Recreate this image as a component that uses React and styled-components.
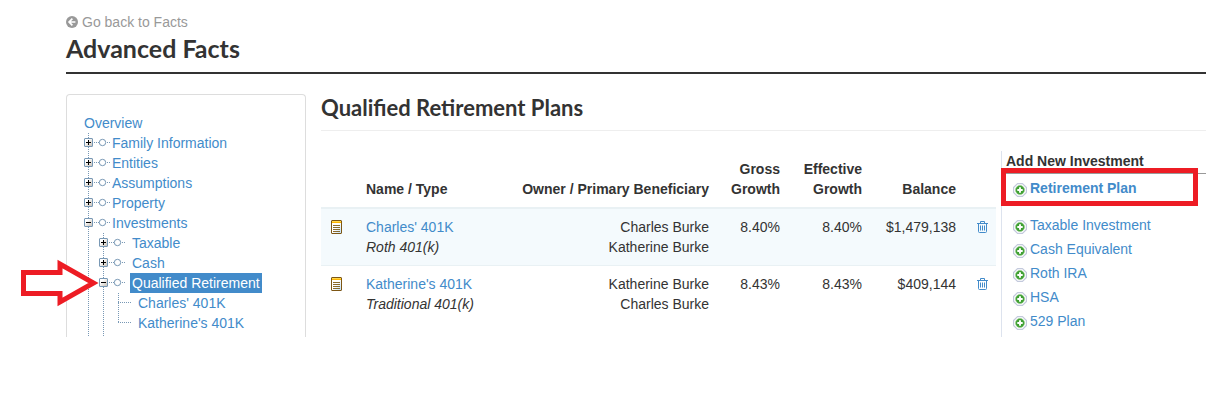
import styled, { createGlobalStyle, css } from "styled-components";

const tree = [
  { label: "Family Information" },
  { label: "Entities" },
  { label: "Assumptions" },
  { label: "Property" },
  {
    label: "Investments",
    children: [
      { label: "Taxable" },
      { label: "Cash" },
      {
        label: "Qualified Retirement",
        selected: true,
        children: [{ label: "Charles' 401K" }, { label: "Katherine's 401K" }],
      },
    ],
  },
];

const plans = [
  {
    name: "Charles' 401K",
    type: "Roth 401(k)",
    owner: "Charles Burke",
    beneficiary: "Katherine Burke",
    gross: "8.40%",
    effective: "8.40%",
    balance: "$1,479,138",
  },
  {
    name: "Katherine's 401K",
    type: "Traditional 401(k)",
    owner: "Katherine Burke",
    beneficiary: "Charles Burke",
    gross: "8.43%",
    effective: "8.43%",
    balance: "$409,144",
  },
];

const investments = [
  "Retirement Plan",
  "Taxable Investment",
  "Cash Equivalent",
  "Roth IRA",
  "HSA",
  "529 Plan",
];

const BackIcon = () => (
  <svg width="12" height="12" viewBox="0 0 12 12" aria-hidden="true">
    <circle cx="6" cy="6" r="6" fill="#999" />
    <path
      d="M6.4 2.7 3.1 6l3.3 3.3M3.4 6h6"
      fill="none"
      stroke="#fff"
      strokeWidth="1.7"
    />
  </svg>
);

const ToggleIcon = ({ open }) => (
  <svg width="9" height="9" viewBox="0 0 9 9" aria-hidden="true">
    <defs>
      <linearGradient id="toggleFill" x1="0" y1="0" x2="1" y2="1">
        <stop offset="0.3" stopColor="#fff" />
        <stop offset="1" stopColor="#c3bbb0" />
      </linearGradient>
    </defs>
    <rect
      x="0.5"
      y="0.5"
      width="8"
      height="8"
      rx="0.5"
      fill="url(#toggleFill)"
      stroke="#7898b5"
    />
    <path d="M2 4.5h5" stroke="#000" />
    {!open && <path d="M4.5 2v5" stroke="#000" />}
  </svg>
);

const NodeIcon = () => (
  <svg width="17" height="9" viewBox="0 0 17 9" aria-hidden="true">
    <path d="M1 4.5h5M14 4.5h3" stroke="#7898b5" strokeDasharray="1 1" />
    <circle cx="9.5" cy="4.5" r="3.2" fill="#fff" stroke="#7898b5" />
  </svg>
);

const LeafIcon = () => (
  <svg width="18" height="9" viewBox="0 0 18 9" aria-hidden="true">
    <path d="M4 4.5h13" stroke="#7898b5" strokeDasharray="1 1" />
  </svg>
);

const NoteIcon = () => (
  <svg width="11" height="14" viewBox="0 0 11 14" aria-hidden="true">
    <defs>
      <linearGradient id="noteFill" x1="0" y1="0" x2="1" y2="1">
        <stop offset="0.5" stopColor="#fff" />
        <stop offset="1" stopColor="#b9dcf5" />
      </linearGradient>
    </defs>
    <rect
      x="0.5"
      y="0.5"
      width="10"
      height="13"
      rx="0.5"
      fill="url(#noteFill)"
      stroke="#7d5614"
    />
    <path d="M1 1.5h9" stroke="#ffd84a" />
    <path d="M1 2.5h9" stroke="#ffb400" />
    <path d="M2 5.500h7M2 7.500h7M2 9.500h7M2 11.500h7" stroke="#8a6a2c" />
  </svg>
);

const TrashIcon = () => (
  <svg
    width="11"
    height="12"
    viewBox="0 0 11 12"
    fill="none"
    stroke="#428bca"
    aria-hidden="true"
  >
    <path d="M0 2.5h11M3.5 2.5v-2h4v2M1.5 2.5v8q0 1 1 1h6q1 0 1-1v-8" />
    <path d="M3.5 4.5v5M5.5 4.5v5M7.5 4.5v5" />
  </svg>
);

const AddIcon = () => (
  <svg width="14" height="14" viewBox="0 0 14 14" aria-hidden="true">
    <path
      d="M4.500 .6h5L13.400 4.500v5L9.500 13.400h-5L.6 9.500v-5z"
      fill="#fff"
      stroke="#c3c9dc"
      strokeWidth="1.2"
      strokeLinejoin="round"
    />
    <circle cx="7" cy="7" r="4.500" fill="#3f9f33" stroke="#8fcb84" strokeWidth=".6" />
    <path d="M7 4.300v5.400M4.300 7h5.400" stroke="#fff" strokeWidth="1.900" />
  </svg>
);

const TreeLevel = ({ items, depth }) => (
  <TreeList $depth={depth}>
    {items.map((item) => (
      <TreeItem key={item.label}>
        <TreeRow>
          {depth < 2 ? (
            <>
              <Toggle
                type="button"
                aria-label={item.label}
                aria-expanded={Boolean(item.children)}
              >
                <ToggleIcon open={Boolean(item.children)} />
              </Toggle>
              <NodeMark $depth={depth}>
                <NodeIcon />
              </NodeMark>
            </>
          ) : (
            <NodeMark $depth={depth}>
              <LeafIcon />
            </NodeMark>
          )}
          <TreeLink href="#" $selected={item.selected}>
            {item.label}
          </TreeLink>
        </TreeRow>
        {item.selected && (
          <Pointer width="78" height="48" viewBox="0 0 78 48" aria-hidden="true">
            <path
              d="M2.5 13.5H39V5L72.5 24 39 43V34.5H2.5Z"
              fill="#fff"
              stroke="#ed1c24"
              strokeWidth="5"
            />
          </Pointer>
        )}
        {item.children && <TreeLevel items={item.children} depth={depth + 1} />}
      </TreeItem>
    ))}
  </TreeList>
);

const App = () => {
  return (
    <>
      <GlobalStyle />
      <Page>
        <BackLink href="#">
          <BackIcon />
          Go back to Facts
        </BackLink>
        <PageTitle>Advanced Facts</PageTitle>
        <Columns>
          <Sidebar>
            <Overview href="#">Overview</Overview>
            <TreeLevel items={tree} depth={0} />
          </Sidebar>
          <Main>
            <SectionTitle>Qualified Retirement Plans</SectionTitle>
            <Content>
              <PlanTable>
                <colgroup>
                  <Col $width={37} />
                  <Col />
                  <Col $width={210} />
                  <Col $width={71} />
                  <Col $width={82} />
                  <Col $width={94} />
                  <Col $width={32} />
                </colgroup>
                <thead>
                  <tr>
                    <Th />
                    <Th>Name / Type</Th>
                    <Th $right>Owner / Primary Beneficiary</Th>
                    <Th $right>Gross Growth</Th>
                    <Th $right>Effective Growth</Th>
                    <Th $right>Balance</Th>
                    <Th />
                  </tr>
                </thead>
                <tbody>
                  {plans.map((plan) => (
                    <PlanRow key={plan.name}>
                      <Td>
                        <IconButton type="button" aria-label="Notes">
                          <NoteIcon />
                        </IconButton>
                      </Td>
                      <Td>
                        <Link href="#">{plan.name}</Link>
                        <PlanType>{plan.type}</PlanType>
                      </Td>
                      <Td $right>
                        {plan.owner}
                        <br />
                        {plan.beneficiary}
                      </Td>
                      <Td $right>{plan.gross}</Td>
                      <Td $right>{plan.effective}</Td>
                      <Td $right>{plan.balance}</Td>
                      <Td $right>
                        <IconButton type="button" aria-label="Delete">
                          <TrashIcon />
                        </IconButton>
                      </Td>
                    </PlanRow>
                  ))}
                </tbody>
              </PlanTable>
              <AddPanel>
                <AddTitle>Add New Investment</AddTitle>
                <AddList>
                  {investments.map((name, i) => (
                    <AddItem key={name} $current={i === 0}>
                      <AddMark>
                        <AddIcon />
                      </AddMark>
                      <Link href="#">{name}</Link>
                      {i === 0 && <Highlight />}
                    </AddItem>
                  ))}
                </AddList>
              </AddPanel>
            </Content>
          </Main>
        </Columns>
      </Page>
    </>
  );
};

export default App;

const GlobalStyle = createGlobalStyle`
  * {
    box-sizing: border-box;
  }

  body {
    margin: 0;
    background-color: #fff;
    color: #333;
    font-family: "Liberation Sans", Arial, sans-serif;
    font-size: 14px;
    line-height: 20px;
  }

  svg {
    display: block;
  }
`;

const Page = styled.div`
  padding: 12px 13px 0 66px;
`;

const Link = styled.a`
  color: #428bca;
  text-decoration: none;
`;

const BackLink = styled(Link)`
  display: flex;
  align-items: center;
  gap: 4px;
  color: #999;
`;

const heading = css`
  margin: 0;
  font-family: Lato, sans-serif;
  font-weight: 700;
`;

const PageTitle = styled.h1`
  ${heading}
  font-size: 25px;
  line-height: 32px;
  padding-bottom: 8px;
  border-bottom: 2px solid #333;
`;

const Columns = styled.div`
  display: flex;
  align-items: flex-start;
  gap: 15px;
  margin-top: 20px;
`;

const Sidebar = styled.nav`
  flex: 0 0 240px;
  padding: 18px 17px 0;
  border: 1px solid #ddd;
  border-bottom: none;
  border-radius: 4px 4px 0 0;
`;

const Overview = styled(Link)`
  display: block;
`;

const dots = "repeating-linear-gradient(#7898b5 0 1px, transparent 1px 2px)";

const TreeList = styled.ul`
  list-style: none;
  margin: 0 0 0 ${({ $depth }) => ($depth ? 15 : 0)}px;
  padding: 0 0 ${({ $depth }) => ($depth === 1 ? 4 : 0)}px;
  background: ${dots} 4px 0 / 1px
    ${({ $depth }) => ($depth === 2 ? "calc(100% - 10px)" : "100%")} no-repeat;
`;

const TreeItem = styled.li`
  position: relative;
`;

const TreeRow = styled.div`
  display: flex;
  height: 20px;
`;

const Toggle = styled.button`
  align-self: flex-start;
  margin: 5px 0 0;
  padding: 0;
  border: none;
  background: none;
  cursor: pointer;
`;

const NodeMark = styled.span`
  margin-top: 5px;
  margin-right: ${({ $depth }) => [0, 5, 4][$depth]}px;
`;

const TreeLink = styled(Link)`
  padding: 0 2px;
  white-space: nowrap;
  ${({ $selected }) =>
    $selected &&
    css`
      background-color: #428bca;
      color: #fff;
    `}
`;

const Pointer = styled.svg`
  position: absolute;
  top: -14px;
  left: -78px;
`;

const Main = styled.main`
  flex: 1;
  min-width: 0;
`;

const SectionTitle = styled.h2`
  ${heading}
  font-size: 22px;
  line-height: 28px;
  padding-bottom: 8px;
  border-bottom: 1px solid #eee;
`;

const Content = styled.div`
  display: flex;
  align-items: flex-start;
  gap: 5px;
  margin-top: 20px;
`;

const PlanTable = styled.table`
  flex: 1;
  min-width: 0;
  table-layout: fixed;
  border-spacing: 0;
`;

const Col = styled.col`
  width: ${({ $width }) => ($width ? `${$width}px` : "auto")};
`;

const Th = styled.th`
  padding: 8px;
  border-bottom: 2px solid #e9f1f4;
  text-align: ${({ $right }) => ($right ? "right" : "left")};
  vertical-align: bottom;
`;

const Td = styled.td`
  padding: 8px;
  text-align: ${({ $right }) => ($right ? "right" : "left")};
  vertical-align: top;
`;

const PlanRow = styled.tr`
  &:nth-child(odd) {
    background-color: #f4fafd;
  }

  & + & td {
    border-top: 1px solid #e9f1f4;
  }
`;

const PlanType = styled.div`
  font-style: italic;
`;

const IconButton = styled.button`
  display: inline-flex;
  align-items: center;
  height: 20px;
  margin: 0;
  padding: 0 0 0 2px;
  border: none;
  background: none;
  vertical-align: top;
  cursor: pointer;
`;

const AddPanel = styled.aside`
  flex: 0 0 205px;
  padding: 0 0 4px 4px;
  border-left: 1px solid #dde3ee;
`;

const AddTitle = styled.h3`
  margin: 0;
  padding-bottom: 2px;
  border-bottom: 1px solid #999;
  font-size: 14px;
`;

const AddList = styled.ul`
  list-style: none;
  margin: 2px 0 0;
  padding: 0;
`;

const AddItem = styled.li`
  position: relative;
  display: flex;
  align-items: center;
  gap: 3px;
  height: 24px;
  padding-left: 7px;
  ${({ $current }) =>
    $current &&
    css`
      margin-bottom: 13px;
      font-weight: 700;
    `}
`;

const AddMark = styled.span`
  padding-top: 4px;
`;

const Highlight = styled.span`
  position: absolute;
  top: -8px;
  left: -5px;
  width: 197px;
  height: 38px;
  border: 5px solid #ed1c24;
  pointer-events: none;
`;
